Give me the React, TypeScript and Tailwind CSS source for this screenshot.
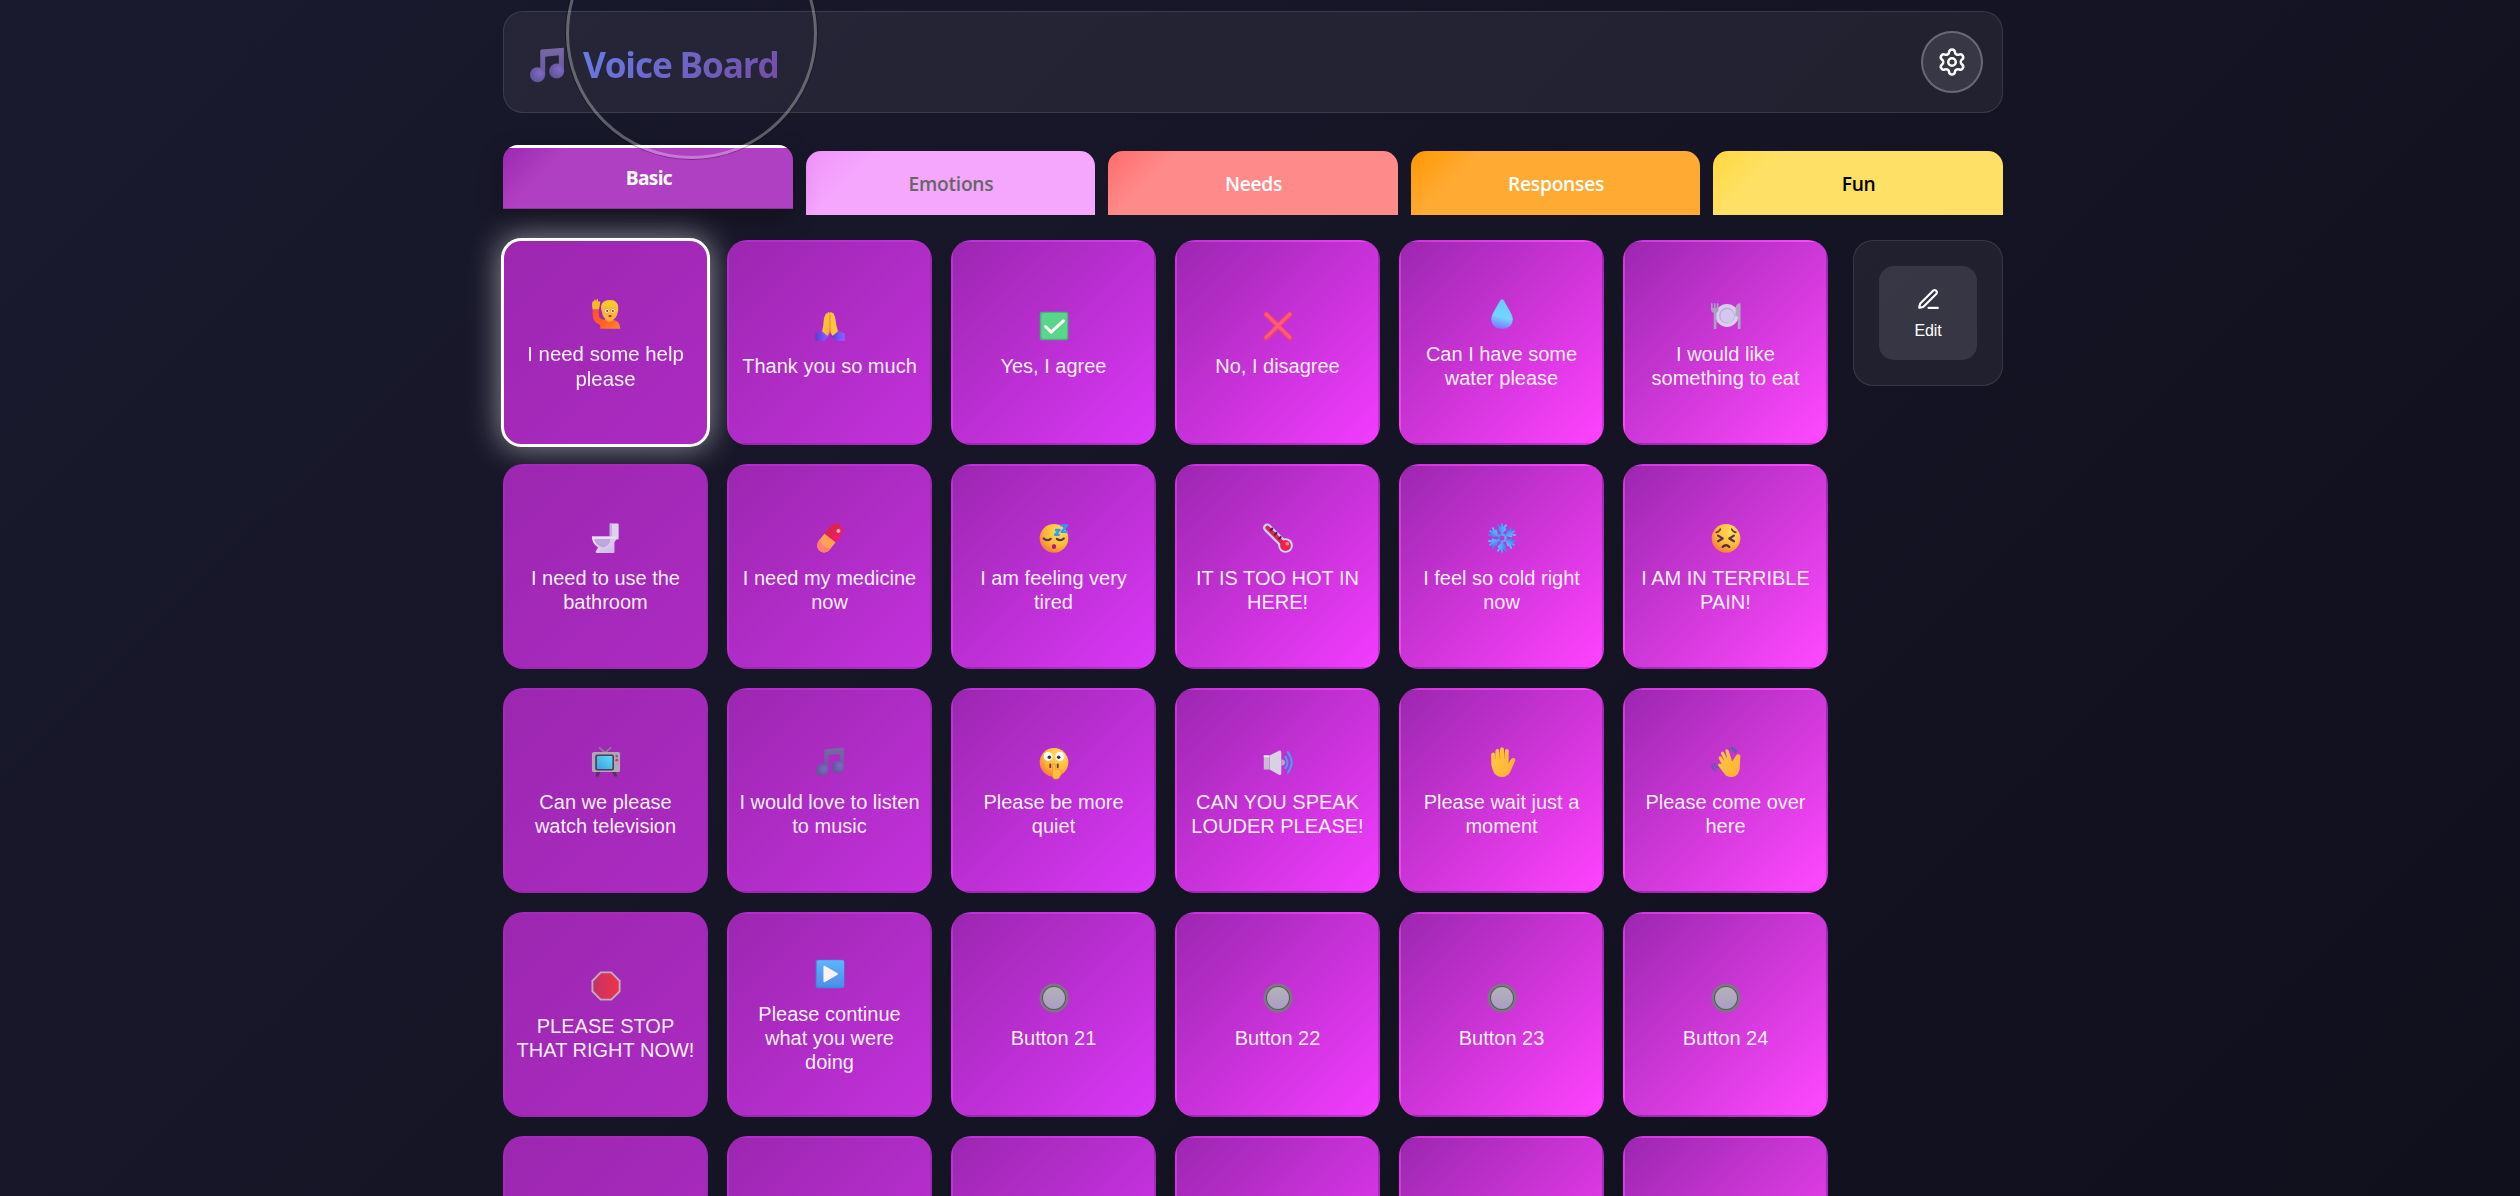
import React from 'react';
import { Settings } from 'lucide-react';

const Gradients = () => (
  <svg className="absolute size-0" aria-hidden="true">
    <defs>
      <radialGradient id="face" cx="0.68" cy="0.25" r="0.85">
        <stop offset="0" stopColor="#ffe05a" />
        <stop offset="0.6" stopColor="#fdb738" />
        <stop offset="1" stopColor="#f4743c" />
      </radialGradient>
      <linearGradient id="skin" x1="0" y1="0" x2="1" y2="1">
        <stop offset="0" stopColor="#ffcd3f" />
        <stop offset="1" stopColor="#ffae35" />
      </linearGradient>
      <linearGradient id="shirt" x1="0" y1="0" x2="1" y2="1">
        <stop offset="0" stopColor="#ff4e38" />
        <stop offset="0.6" stopColor="#ff641f" />
        <stop offset="1" stopColor="#f48a3c" />
      </linearGradient>
      <linearGradient id="sleeve" x1="0" y1="0" x2="1" y2="0">
        <stop offset="0" stopColor="#5b3cc0" />
        <stop offset="0.5" stopColor="#7a4cf5" />
        <stop offset="1" stopColor="#8a63ff" />
      </linearGradient>
      <linearGradient id="drop" x1="0.6" y1="0" x2="0.4" y2="1">
        <stop offset="0" stopColor="#62cdf8" />
        <stop offset="0.6" stopColor="#74d5ff" />
        <stop offset="1" stopColor="#7c74ff" />
      </linearGradient>
      <linearGradient id="note" x1="0" y1="0" x2="0" y2="1">
        <stop offset="0" stopColor="#7868a6" />
        <stop offset="1" stopColor="#65599f" />
      </linearGradient>
      <radialGradient id="noteHead" cx="0.65" cy="0.4" r="0.6">
        <stop offset="0" stopColor="#8268c8" />
        <stop offset="1" stopColor="#62569a" />
      </radialGradient>
      <linearGradient id="porcelain" x1="0" y1="0" x2="1" y2="1">
        <stop offset="0" stopColor="#e9e0f4" />
        <stop offset="1" stopColor="#cfb8ea" />
      </linearGradient>
      <linearGradient id="screen" x1="0" y1="1" x2="1" y2="0">
        <stop offset="0" stopColor="#35a5e0" />
        <stop offset="1" stopColor="#5fdcfb" />
      </linearGradient>
      <linearGradient id="stop" x1="0" y1="0" x2="1" y2="0">
        <stop offset="0" stopColor="#c43369" />
        <stop offset="1" stopColor="#f03245" />
      </linearGradient>
      <linearGradient id="play" x1="0" y1="0" x2="0" y2="1">
        <stop offset="0" stopColor="#5cb6fb" />
        <stop offset="1" stopColor="#4d8fea" />
      </linearGradient>
      <linearGradient id="knob" x1="0" y1="0" x2="0" y2="1">
        <stop offset="0" stopColor="#b5b1ba" />
        <stop offset="1" stopColor="#aa9dc4" />
      </linearGradient>
      <linearGradient id="flake" x1="0" y1="0" x2="1" y2="0">
        <stop offset="0" stopColor="#3a86f0" />
        <stop offset="1" stopColor="#52c8ff" />
      </linearGradient>
    </defs>
  </svg>
);

const Note = () => (
  <>
    <path d="M10 3.4Q10 2.5 11 2.3L31 0.6V21H26.5V7.4L14.4 8.6V25H10Z" fill="url(#note)" />
    <circle cx="7.6" cy="24.6" r="6.7" fill="url(#noteHead)" />
    <circle cx="24.6" cy="21.3" r="6.7" fill="url(#noteHead)" />
  </>
);

const art: Record<string, React.ReactNode> = {
  help: (
    <>
      <path d="M2 11h6.5v7q0 4 5 4.500h10q7 1 7.500 9.500H10v-4Q2 25 2 17Z" fill="url(#shirt)" />
      <path d="M2 11.500Q.8 6 2 3.500q1-1 1.300.2Q4 .8 5 1.200l.6 2Q6.300.300 7.500 1l.3 2.800Q9.800 2.600 10 4.200q-.4 4-1.500 7.300Z" fill="#f8b62c" />
      <path d="M15 20h9v3q-4.500 4-9 0Z" fill="#f79a35" />
      <ellipse cx="20" cy="13.500" rx="8.300" ry="9.800" fill="#ffb43a" />
      <path d="M11 12Q9.500 4 17 2.300q9-2 11.500 5Q29.500 12 28 16q-1-6-3.500-7.500-5 1.500-10-.5Q12 9 12 15Z" fill="#f7c92f" />
      <circle cx="17" cy="13.500" r="1.900" fill="#fff" /><circle cx="23.400" cy="13.500" r="1.900" fill="#fff" />
      <circle cx="17.200" cy="13.500" r="1" fill="#54384c" /><circle cx="23.200" cy="13.500" r="1" fill="#54384c" />
      <ellipse cx="20.200" cy="18.800" rx="1.800" ry="1.200" fill="#b52638" />
    </>
  ),
  thanks: (
    <>
      <path d="M.5 24 8 20l7 6-5 6H.5Z" fill="url(#sleeve)" />
      <path d="M31.500 24 24 20l-7 6 5 6h9.500Z" fill="url(#sleeve)" />
      <path d="M7.500 21.500Q9 17 9.300 10 9.500 7 11 4q1-2.200 2-1.200.7-2.300 1.800-1.500L16 2v18q-1 5-3 6.500Z" fill="url(#skin)" />
      <path d="M24.500 21.500Q22.500 16 22 10 21.500 6 20 3q-1-1.700-1.800-.7Q17.300.2 16 2v18q1 5 3 6.500Z" fill="#ffc53f" />
      <path d="M16 4v15q0 3-1.500 6" stroke="#ef8834" strokeWidth="1" fill="none" />
    </>
  ),
  yes: (
    <>
      <rect x=".8" y=".8" width="30.500" height="30.500" rx="2.500" fill="#45b478" />
      <rect x="2.500" y="2" width="27.500" height="27.500" rx="2" fill="#59d68a" />
      <path d="m7 16.500 6 6L26 10.500" fill="none" stroke="#fdf3fa" strokeWidth="3.200" strokeLinecap="round" strokeLinejoin="round" />
    </>
  ),
  no: (
    <>
      <path d="M3.500 3.500 28.500 28.500M28.500 3.500 3.500 28.500" stroke="#ee4763" strokeWidth="5.600" strokeLinecap="round" />
      <path d="M3.500 3.300 28.500 28M28.500 3.300 3.500 28" stroke="#ff5c7c" strokeWidth="3.200" strokeLinecap="round" />
    </>
  ),
  water: <path d="M16 .3Q17.400.3 18.500 2.500L25.500 15q2 3.700 2 6.300 0 10.500-11.500 10.500T4.500 21.300q0-2.600 2-6.300l7-12.500Q14.600.3 16 .3Z" fill="url(#drop)" />,
  eat: (
    <>
      <circle cx="17" cy="17.500" r="12.300" fill="#d9cdf0" />
      <circle cx="17" cy="17.500" r="8.500" fill="#bfb0dc" />
      <circle cx="17.500" cy="18" r="7.200" fill="#d5c8ee" />
      <path d="M0 4.500h1.800v5h1.300v-5h1.800v5h1.300v-5H8v7q0 2.500-2.200 3.500v17H2.900V15Q0 14 0 11.500Z" fill="#aaa0bd" />
      <path d="M26.500 8q1-3.500 5-3.500v27.500h-2.900V18.500h-2.600Z" fill="#b1a7c1" />
    </>
  ),
  toilet: (
    <>
      <path d="M20 .5h8.500q1 0 1 1v15q0 1-1 1H20Z" fill="#ded2ed" />
      <path d="M20 .5h2.500v17H20Z" fill="#c5b1de" />
      <path d="M1 14.500h26v3l-2 3V31q0 1-1 1H6q-1.500 0-1-1.500L7.500 26Q1 22.500 1 14.500Z" fill="url(#porcelain)" />
      <path d="M3.500 17h17q0 7-7.500 9Q4.500 24 3.500 17Z" fill="#bea6dc" />
      <path d="M1 14.500h26v2.200H1Z" fill="#eae1f3" />
    </>
  ),
  pill: (
    <g transform="rotate(38 16 16)">
      <path d="M8.500 16V6a7.500 7.500 0 0 1 15 0v10Z" fill="#dd2450" />
      <path d="M17 -1a7 7 0 0 1 6.500 7v10H17Z" fill="#f01d5f" />
      <path d="M8.500 16v10a7.500 7.500 0 0 0 15 0V16Z" fill="#ffa353" />
      <path d="M8.500 24v2a7.500 7.500 0 0 0 15 0v-2q-7 6-15 0Z" fill="#ff7f72" />
      <circle cx="18.500" cy="4.500" r="2" fill="#ffc3d0" />
    </g>
  ),
  tired: (
    <>
      <circle cx="16" cy="16.300" r="15.300" fill="url(#face)" />
      <path d="M5 16.500q3.500 3.500 7.500.5M19 17q4 3 7.500-.5" fill="none" stroke="#5a3450" strokeWidth="2.300" strokeLinecap="round" />
      <ellipse cx="16" cy="25" rx="2.200" ry="2.700" fill="#b3137b" />
      <path d="M17 7.500h5l-5 5h5M23 2.500h7l-6 7h7" fill="none" stroke="#2f9df0" strokeWidth="2.500" strokeLinejoin="round" />
    </>
  ),
  hot: (
    <>
      <path d="M4.500 5 23.500 24" stroke="#b9d4f5" strokeWidth="9" strokeLinecap="round" />
      <circle cx="24" cy="24" r="7.800" fill="#c5dcf8" />
      <path d="M4.800 5 23.500 24" stroke="#e91f4d" strokeWidth="4.600" strokeLinecap="round" />
      <circle cx="24" cy="24" r="5.800" fill="#ee2347" />
      <circle cx="26" cy="22" r="2" fill="#ff7d91" />
      <path d="m7.500 8.500 3-3.200M12 13l3-3.200M16.500 17.500l3-3.200" stroke="#3f2848" strokeWidth="2.200" />
    </>
  ),
  cold: (
    <g fill="none" stroke="url(#flake)" strokeWidth="2.100" strokeLinecap="round" strokeLinejoin="round">
      <circle cx="16" cy="16" r="3.800" />
      {[0, 60, 120, 180, 240, 300].map((a) => (
        <path key={a} transform={`rotate(${a} 16 16)`} d="M16 12.200 16.010 1.200M11.800 2.500 16 7.200l4.200-4.700M12.500 6.500l3.500 3.700 3.500-3.700" />
      ))}
    </g>
  ),
  pain: (
    <>
      <circle cx="16" cy="16.300" r="15.300" fill="url(#face)" />
      <path d="m7.500 13.500 5 3-5 3M24.500 13.500l-5 3 5 3" fill="none" stroke="#5a3450" strokeWidth="2.300" strokeLinecap="round" strokeLinejoin="round" />
      <path d="M5.500 10q3.500-.5 4.500-3.500M26.500 10q-3.500-.5-4.500-3.500" fill="none" stroke="#6b3a44" strokeWidth="1.700" strokeLinecap="round" />
      <path d="M12.500 25.500q3.500-3.500 7 0" fill="none" stroke="#5a2a3f" strokeWidth="2.400" strokeLinecap="round" />
    </>
  ),
  tv: (
    <>
      <path d="M9 .8 15 6 21 .8" stroke="#8d8492" strokeWidth="1.700" fill="none" strokeLinecap="round" />
      <path d="M6 25h4.500L8 31.500H5ZM21.500 25H26l2 6.500h-3Z" fill="#4c3a55" />
      <rect x="1" y="5.200" width="30" height="21.500" rx="2" fill="#b0a6b4" />
      <rect x="4.500" y="8" width="20" height="17" rx="2" fill="#4d3d58" />
      <rect x="6.300" y="9.500" width="16.500" height="14" rx="1" fill="url(#screen)" />
      <circle cx="27.500" cy="9.700" r="1.500" fill="#796e80" /><circle cx="27.500" cy="14" r="1.500" fill="#dc3a50" />
    </>
  ),
  music: <Note />,
  quiet: (
    <>
      <circle cx="16" cy="16.300" r="15.300" fill="url(#face)" />
      <circle cx="9.800" cy="10" r="4.900" fill="#fff" /><circle cx="22.200" cy="10" r="4.900" fill="#fff" />
      <circle cx="11" cy="11" r="1.900" fill="#4a2c3d" /><circle cx="21" cy="11" r="1.900" fill="#4a2c3d" />
      <path d="M12 18.500v3M20 18.500v3" stroke="#733743" strokeWidth="2" strokeLinecap="round" />
      <path d="M14.500 18.500q1.700-2 3.200 0v5.500q5-1.500 6 2.500.3 5-3.700 7.500h-4q-3-3-1.500-8Z" fill="#ffbf3c" stroke="#ef8b35" strokeWidth=".7" />
    </>
  ),
  loud: (
    <>
      <path d="M.8 9h6v15h-6Z" fill="#c6bdd2" />
      <path d="M7 9 17 4q2.500-.7 2.500 2v22q0 2.500-2.500 1.500L7 24Z" fill="#d9d0e4" />
      <path d="M.8 9H7v2H.8Z" fill="#ece5f2" />
      <path d="M19.500 13q4 .5 4 3.500t-4 3.500Z" fill="#b8a9cf" />
      <path d="M24 10.500q4 6 0 12M26.500 5.500q8 11 0 22" fill="none" stroke="#3aa5f2" strokeWidth="2.100" strokeLinecap="round" />
    </>
  ),
  wait: (
    <g transform="translate(2.500 0)">
      <path d="M2 17V7.800a2 2 0 0 1 4 0V13L6.600 4a2 2 0 0 1 4 .1l.3 8L11.500 2.200a2 2 0 0 1 4 0l.3 10L16.700 4a2 2 0 0 1 4 .3L20.500 18q1-3.500 3-5.500 2.200-1.600 3.700 0 1 1.300-.2 3.200L23.500 24q-3 8-10 8-7.500 0-10-8Q2 20.500 2 17Z" fill="url(#skin)" />
      <path d="M6.300 8v5M11.200 6v6.500M16.200 6v6.500" stroke="#f5952f" strokeWidth=".7" />
    </g>
  ),
  come: (
    <>
      <path d="M9 13.500q-1.700-2.500 0-3.300 1.200-.7 2.500 1l3 4L11 8q-.9-2.300.6-3 1.500-.6 2.500 1.500l3.500 6.500L15.500 5q-.4-2.300 1.200-2.600Q18.200 2.200 19 4.500l3.500 11L26 10q1.500-3 4-2.200 1.800.8 1.300 3.700L30.500 24q-2 8-8.500 8-6 0-8.500-4.500L8.500 21q-1.700-1.700-.5-2.900 1.300-1 3.500.4Z" fill="url(#skin)" />
      <path d="M19.500 1.500q4 .3 6.300 4.500M22 .5q3.500 1 5 4M1 19q0 4.500 4.500 6.500M3.500 17.500q.3 3.300 4.500 4.800" fill="none" stroke="#4f61a8" strokeWidth="1.500" strokeLinecap="round" />
    </>
  ),
  stop: (
    <>
      <path d="M10 .5h12L31.500 10v12L22 31.500H10L.5 22V10Z" fill="#bdb0bd" />
      <path d="M10.800 2.500h10.400l8.300 8.300v10.400l-8.300 8.300H10.800l-8.300-8.300V10.800Z" fill="url(#stop)" />
    </>
  ),
  play: (
    <>
      <rect x=".8" y=".8" width="30.500" height="30.500" rx="2.500" fill="#3f8cda" />
      <rect x="2" y="1.200" width="29" height="28" rx="2" fill="url(#play)" />
      <path d="M9 8.500q0-2 1.700-1L24 15.200q1.200.8 0 1.600L10.700 24.500q-1.700 1-1.700-1Z" fill="#fdf1fb" />
    </>
  ),
  button: (
    <>
      <circle cx="16" cy="16" r="15.500" fill="#7c7880" />
      <circle cx="16" cy="16" r="12.800" fill="#5b5660" />
      <circle cx="16" cy="16" r="11.700" fill="url(#knob)" />
    </>
  ),
};

const cards: [string, string][] = [
  ['help', 'I need some help please'],
  ['thanks', 'Thank you so much'],
  ['yes', 'Yes, I agree'],
  ['no', 'No, I disagree'],
  ['water', 'Can I have some water please'],
  ['eat', 'I would like something to eat'],
  ['toilet', 'I need to use the bathroom'],
  ['pill', 'I need my medicine now'],
  ['tired', 'I am feeling very tired'],
  ['hot', 'IT IS TOO HOT IN HERE!'],
  ['cold', 'I feel so cold right now'],
  ['pain', 'I AM IN TERRIBLE PAIN!'],
  ['tv', 'Can we please watch television'],
  ['music', 'I would love to listen to music'],
  ['quiet', 'Please be more quiet'],
  ['loud', 'CAN YOU SPEAK LOUDER PLEASE!'],
  ['wait', 'Please wait just a moment'],
  ['come', 'Please come over here'],
  ['stop', 'PLEASE STOP THAT RIGHT NOW!'],
  ['play', 'Please continue what you were doing'],
  ['button', 'Button 21'],
  ['button', 'Button 22'],
  ['button', 'Button 23'],
  ['button', 'Button 24'],
  ['button', ''],
  ['button', ''],
  ['button', ''],
  ['button', ''],
  ['button', ''],
  ['button', ''],
];

const columnEnds = ['to-[#ac2bc2]', 'to-[#c331dc]', 'to-[#da37f6]', 'to-[#f23cff]', 'to-[#ff42ff]', 'to-[#ff48ff]'];

function Card({ index, icon, label }: { index: number; icon: string; label: string }) {
  const selected = index === 0;
  return (
    <button
      className={`relative flex h-[205px] flex-col items-center justify-center rounded-[20px] bg-linear-[135deg] from-[#9c27b0] text-white ${columnEnds[index % 6]} ${
        selected
          ? 'scale-[1.02] border-[3px] border-white px-[8px] shadow-[0_0_30px_rgba(255,255,255,0.5)]'
          : 'border-2 border-transparent px-[9px]'
      }`}
    >
      {label && (
        <>
          <svg viewBox="0 0 32 32" className="mt-1 mb-[13px] ml-px size-[30px] shrink-0 overflow-visible">
            {art[icon]}
          </svg>
          <span className="text-[20px] leading-6 text-white/95">{label}</span>
        </>
      )}
    </button>
  );
}

const tabs = [
  { name: 'Emotions', style: 'from-[#f093fb] to-[#f5a6fd] text-[#666666]' },
  { name: 'Needs', style: 'from-[#ff6b6b] to-[#ff8a8a] text-white' },
  { name: 'Responses', style: 'from-[#ff9800] to-[#ffaa33] text-white' },
  { name: 'Fun', style: 'from-[#ffd93d] to-[#ffe066] text-black' },
];

export default function App() {
  return (
    <div className="relative h-[1196px] w-[2520px] overflow-hidden bg-linear-[135deg] from-[#1a1a2e] to-[#100f1c] font-['Liberation_Sans',Arial,sans-serif]">
      <Gradients />
      <div className="ml-[503px] w-[1500px] pt-[11px]">
        <header className="flex h-[102px] items-center justify-between rounded-[20px] border border-white/10 bg-white/[0.06] pr-[19px] pl-[25px]">
          <h1 className="flex items-center gap-[18px]">
            <svg viewBox="0 0 32 32" className="mt-[6px] size-[36px] overflow-visible">
              <Note />
            </svg>
            <span className="mt-[3px] bg-linear-[135deg] from-[#667eea] to-[#764ba2] bg-clip-text font-['Open_Sans','Noto_Sans',sans-serif] text-[35.2px] leading-[48px] font-bold tracking-[-1.15px] text-transparent">
              Voice Board
            </span>
          </h1>
          <button className="flex size-[62px] items-center justify-center rounded-full border-2 border-white/25 bg-white/10 text-white">
            <Settings size={30} strokeWidth={2} />
          </button>
        </header>

        <nav className="mt-[38px] grid grid-cols-5 gap-[12.8px] font-['Open_Sans','Noto_Sans',sans-serif] text-[19.2px] font-semibold">
          <button className="relative h-16 -translate-y-1.5 overflow-hidden rounded-t-[15px] bg-linear-[135deg] from-[#9c27b0] to-[#b040c2] to-20% text-white shadow-[0_8px_25px_rgba(0,0,0,0.3)]">
            <span className="absolute inset-x-0 top-0 h-[3px] bg-white" />
            <span className="absolute inset-x-0 bottom-0 h-px bg-black/20" />
            <span className="relative top-px left-px font-bold tracking-[-0.7px]">Basic</span>
          </button>
          {tabs.map((t) => (
            <button key={t.name} className={`h-16 rounded-t-[15px] bg-linear-[135deg] to-20% pt-[2px] pl-px tracking-[-0.25px] ${t.style}`}>
              {t.name}
            </button>
          ))}
        </nav>

        <div className="mt-[25px] flex items-start justify-between">
          <main className="grid w-[1325px] grid-cols-6 gap-[19px]">
            {cards.map(([icon, label], i) => (
              <Card key={i} index={i} icon={icon} label={label} />
            ))}
          </main>
          <aside className="flex h-[146px] w-[150px] items-center justify-center rounded-[20px] border border-white/10 bg-white/[0.06]">
            <button className="flex h-[94px] w-[98px] flex-col items-center justify-center rounded-[15px] bg-white/10 text-white">
              <svg viewBox="0 0 24 24" className="ml-px size-[25px] fill-none stroke-white stroke-2" strokeLinecap="round" strokeLinejoin="round">
                <path d="M12 20h9" />
                <path d="M16.376 3.622a1 1 0 0 1 3.002 3.002L7.368 18.635a2 2 0 0 1-.855.506l-2.872.838a.5.5 0 0 1-.62-.62l.838-2.872a2 2 0 0 1 .506-.854z" />
              </svg>
              <span className="mt-2.5 text-[16px] leading-[18px] tracking-[-0.2px]">Edit</span>
            </button>
          </aside>
        </div>
      </div>
      <div className="pointer-events-none absolute top-[-92px] left-[566px] z-20 size-[251px] rounded-full border-[3px] border-white/30 shadow-[0_0_0_1px_rgba(0,0,0,0.3)]" />
    </div>
  );
}
